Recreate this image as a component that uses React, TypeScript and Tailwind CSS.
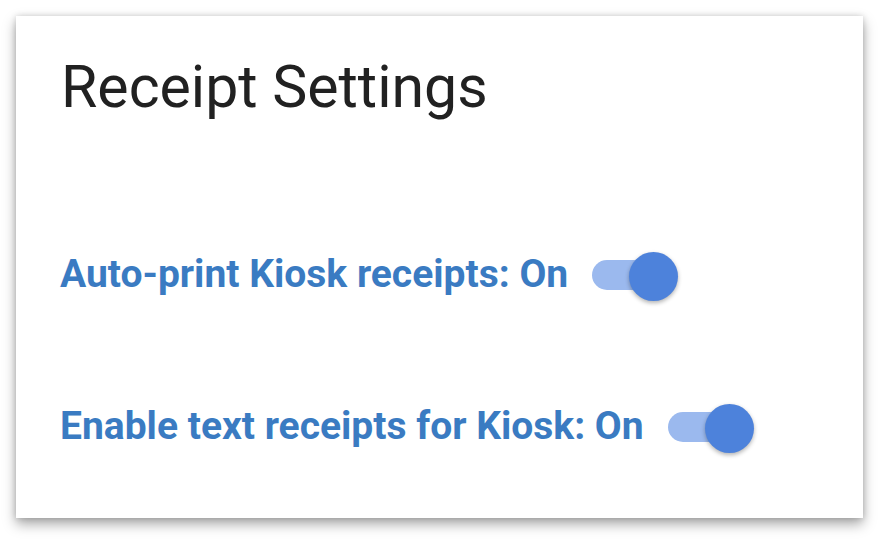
import React from 'react';

const Toggle: React.FC<{ on: boolean }> = ({ on }) => (
  <div className="relative h-[30px] w-[72px] shrink-0">
    <div className={`h-[30px] w-[72px] rounded-full ${on ? 'bg-[#9bb9ee]' : 'bg-gray-300'}`} />
    <div
      className={`absolute top-[-8px] h-[49px] w-[49px] rounded-full shadow-[0_2px_4px_rgba(0,0,0,0.3)] ${on ? 'left-[37px] bg-[#4d82db]' : 'left-[-10px] bg-white'}`}
    />
  </div>
);

const SettingRow: React.FC<{ label: string; on: boolean }> = ({ label, on }) => (
  <div className="flex h-[49px] items-center gap-[24px]">
    <span className="text-[39px] font-bold leading-none text-[#3a7bc2]">{label}: {on ? 'On' : 'Off'}</span>
    <Toggle on={on} />
  </div>
);

export default function App() {
  return (
    <div className="h-[540px] w-[880px] bg-white p-4 font-['Roboto',sans-serif]">
      <div className="h-[502px] w-[847px] bg-white pl-[44px] pt-[41px] shadow-[0_6px_12px_rgba(0,0,0,0.35),0_0_6px_rgba(0,0,0,0.15)]">
        <h1 className="ml-[1px] text-[59px] font-normal leading-none text-[#212121]">Receipt Settings</h1>
        <div className="mt-[134px] flex flex-col gap-[103px]">
          <SettingRow label="Auto-print Kiosk receipts" on />
          <SettingRow label="Enable text receipts for Kiosk" on />
        </div>
      </div>
    </div>
  );
}
